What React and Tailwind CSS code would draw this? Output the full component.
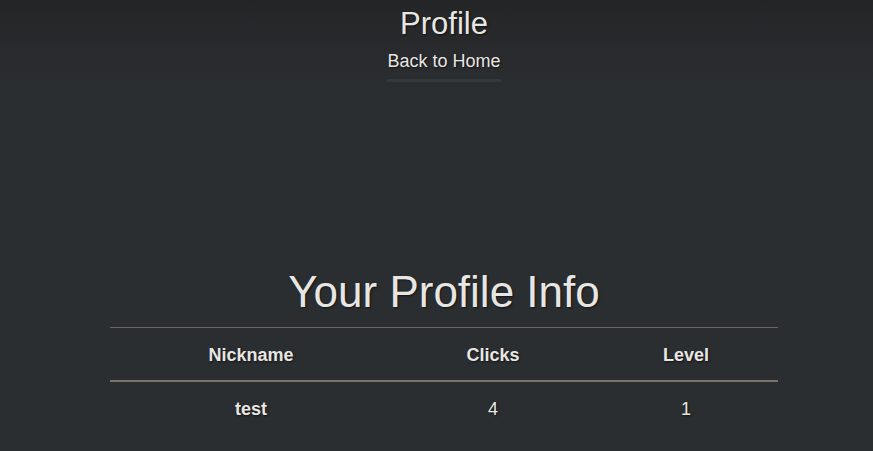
const profile = { nickname: "test", clicks: 4, level: 1 };

const App = () => {
    return (
        <div className="h-[451px] w-full overflow-hidden pl-[15px] bg-[#2b2e31] font-['Liberation_Sans',Arial,sans-serif] text-[#e8e6e3] [text-shadow:1px_1px_2px_rgba(0,0,0,0.6)]">
            <header className="flex flex-col items-center bg-gradient-to-b from-[#242527] to-[#2b2e31] -ml-[15px] pl-[15px] pt-[5px] h-[90px]">
                <h1 className="text-[31px] leading-[38px]">Profile</h1>
                <a href="#" className="mt-[7px] text-[18px] leading-[22px] pb-[7px] border-b-[3px] border-[#35383b]">
                    Back to Home
                </a>
            </header>

            <main className="flex flex-col items-center pt-[174px]">
                <h2 className="text-[44px] leading-[56px]">Your Profile Info</h2>
                <table className="mt-[7px] w-[668px] text-[18px] border-t border-[#6b6660]">
                    <thead>
                        <tr className="border-b-2 border-[#7d7367]">
                            <th className="w-[282px] h-[53px] pt-[3px] font-bold">Nickname</th>
                            <th className="w-[202px] pt-[3px] font-bold">Clicks</th>
                            <th className="w-[184px] pt-[3px] font-bold">Level</th>
                        </tr>
                    </thead>
                    <tbody>
                        <tr>
                            <td className="h-[53px] pt-[3px] text-center font-bold">{profile.nickname}</td>
                            <td className="pt-[3px] text-center">{profile.clicks}</td>
                            <td className="pt-[3px] text-center">{profile.level}</td>
                        </tr>
                    </tbody>
                </table>
            </main>
        </div>
    );
};

export default App;
